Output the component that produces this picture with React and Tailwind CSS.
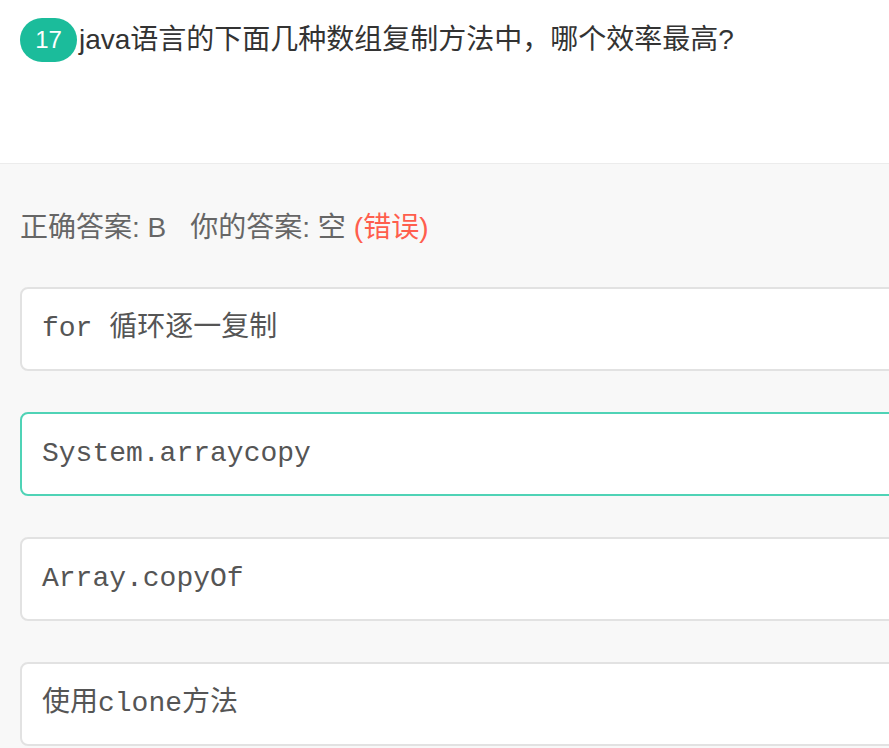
import React from "react";

export default function App() {
    const options = [
        { text: "for 循环逐一复制", active: false },
        { text: "System.arraycopy", active: true },
        { text: "Array.copyOf", active: false },
        { text: "使用clone方法", active: false },
    ];

    return (
        <div className="w-full min-h-screen overflow-hidden bg-[#f8f8f8] font-['Liberation_Sans','Noto_Sans_CJK_SC',sans-serif]">
            {/* --- Question --- */}
            <div className="h-[164px] bg-white border-b border-[#ececec] px-5 pt-[18px]">
                <div className="flex items-center">
                    <span className="flex h-[44px] w-[57px] items-center justify-center rounded-full bg-[#1bbc9b] text-[24px] text-white">
                        17
                    </span>
                    <span className="ml-[2px] text-[28px] leading-[44px] text-[#333]">
                        java语言的下面几种数组复制方法中，哪个效率最高?
                    </span>
                </div>
            </div>

            {/* --- Answer + options --- */}
            <div className="pl-5 pt-[48px]">
                <div className="text-[28px] leading-[32px] text-[#666]">
                    <span>正确答案: B</span>
                    <span className="ml-[24px]">你的答案: 空</span>
                    <span className="ml-[8px] text-[#ff5e4d]">(错误)</span>
                </div>

                <div className="mt-[43px] flex flex-col gap-[41px] -mr-6">
                    {options.map((opt, idx) => (
                        <div
                            key={idx}
                            className={
                                opt.active
                                    ? "flex h-[84px] items-center rounded-lg border-2 border-[#4fd3b6] bg-white px-[20px]"
                                    : "flex h-[84px] items-center rounded-lg border-2 border-[#e2e2e2] bg-white px-[20px]"
                            }
                        >
                            <span className="whitespace-pre font-['Liberation_Mono','Noto_Sans_CJK_SC',monospace] text-[28px] text-[#555]">
                                {opt.text}
                            </span>
                        </div>
                    ))}
                </div>
            </div>
        </div>
    );
}
